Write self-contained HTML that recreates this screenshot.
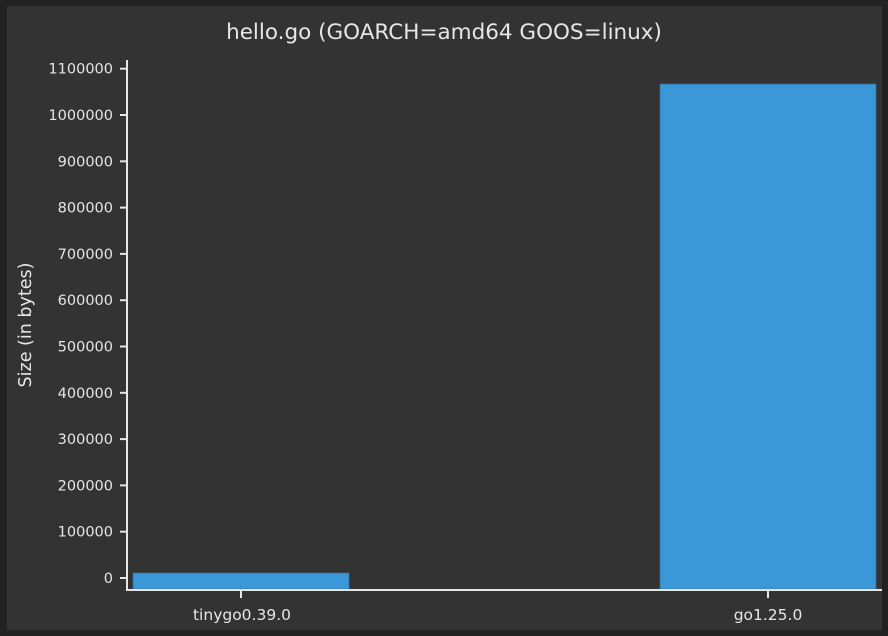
<!DOCTYPE html>
<html><head><meta charset="utf-8"><style>
html,body{margin:0;padding:0;background:#222;}
svg{display:block}
text{font-family:"DejaVu Sans","Liberation Sans",sans-serif;fill:#e6e6e6}
</style></head><body>
<svg width="888" height="636" viewBox="0 0 888 636">
<rect x="0" y="0" width="888" height="636" fill="#222"/>
<rect x="7" y="6" width="875" height="624" fill="#333"/>
<text x="444" y="39" font-size="21.5" text-anchor="middle">hello.go (GOARCH=amd64 GOOS=linux)</text>
<text transform="translate(31,325) rotate(-90)" font-size="17.5" text-anchor="middle">Size (in bytes)</text>
<rect x="133" y="573" width="216" height="16" fill="#3a98d9" stroke="#3a6d96" stroke-width="0.7"/>
<rect x="660" y="84" width="216" height="505" fill="#3a98d9" stroke="#3a6d96" stroke-width="0.7"/>
<g stroke="#e6e6e6" stroke-width="2" fill="none">
<line x1="127" y1="60" x2="127" y2="590"/>
<line x1="126" y1="590" x2="882" y2="590"/>
<line x1="241" y1="590" x2="241" y2="598"/>
<line x1="768" y1="590" x2="768" y2="598"/>
<line x1="120" y1="578" x2="127" y2="578"/>
<line x1="120" y1="531.7" x2="127" y2="531.7"/>
<line x1="120" y1="485.4" x2="127" y2="485.4"/>
<line x1="120" y1="439.1" x2="127" y2="439.1"/>
<line x1="120" y1="392.8" x2="127" y2="392.8"/>
<line x1="120" y1="346.5" x2="127" y2="346.5"/>
<line x1="120" y1="300.2" x2="127" y2="300.2"/>
<line x1="120" y1="253.9" x2="127" y2="253.9"/>
<line x1="120" y1="207.6" x2="127" y2="207.6"/>
<line x1="120" y1="161.3" x2="127" y2="161.3"/>
<line x1="120" y1="115" x2="127" y2="115"/>
<line x1="120" y1="68.7" x2="127" y2="68.7"/>
</g>
<g font-size="14.5" text-anchor="end">
<text x="113" y="583">0</text>
<text x="113" y="536.7">100000</text>
<text x="113" y="490.4">200000</text>
<text x="113" y="444.1">300000</text>
<text x="113" y="397.8">400000</text>
<text x="113" y="351.5">500000</text>
<text x="113" y="305.2">600000</text>
<text x="113" y="258.9">700000</text>
<text x="113" y="212.6">800000</text>
<text x="113" y="166.3">900000</text>
<text x="113" y="120">1000000</text>
<text x="113" y="73.7">1100000</text>
</g>
<g font-size="15.5" text-anchor="middle">
<text x="242" y="620">tinygo0.39.0</text>
<text x="768" y="620">go1.25.0</text>
</g>
</svg>
</body></html>
